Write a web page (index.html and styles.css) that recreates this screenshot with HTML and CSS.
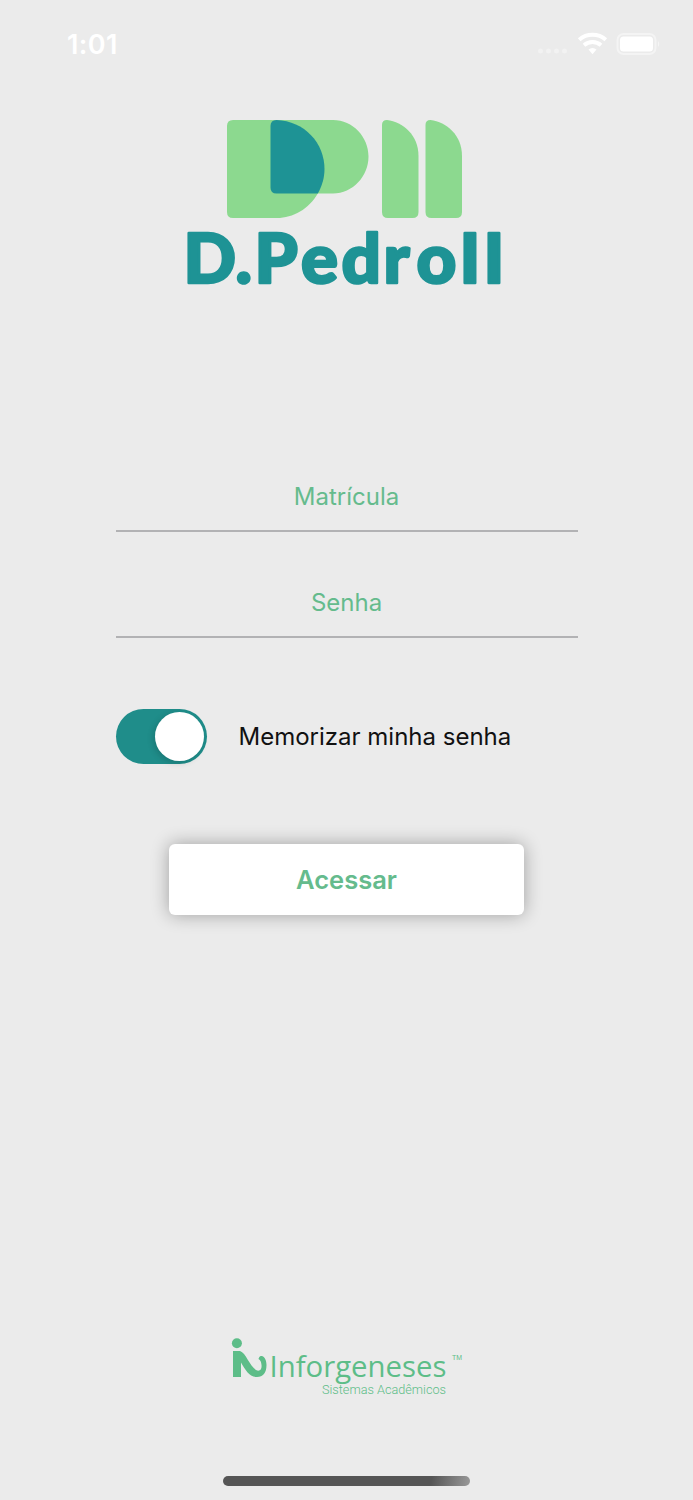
FILE: index.html
```html
<!DOCTYPE html>
<html lang="pt-BR">
<head>
<meta charset="utf-8">
<meta name="viewport" content="width=device-width">
<title>D.PedroII</title>
<link rel="stylesheet" href="styles.css">
</head>
<body>
<main class="screen">
  <header class="status">
    <span class="time">1:01</span>
    <svg class="indicators" width="124" height="28" viewBox="0 0 124 28">
      <g class="dots"><circle cx="4.5" cy="21" r="2.5"/><circle cx="12.5" cy="21" r="2.5"/><circle cx="20.5" cy="21" r="2.5"/><circle cx="28.5" cy="21" r="2.5"/></g>
      <g class="wifi"><path d="M43.2 9.700a20.500 20.500 0 0 1 26.600 0"/><path d="M48 15.200a13 13 0 0 1 17 0"/><path class="tip" d="M52.500 19.600a6 6 0 0 1 8 0l-4 4.600z"/></g>
      <rect class="case" x="81.500" y="4" width="38" height="20" rx="6"/>
      <rect class="charge" x="84" y="6.500" width="33" height="15" rx="3.500"/>
      <path class="pole" d="M122 11q2.500 3 0 6z"/>
    </svg>
  </header>

  <svg class="brand" width="330" height="190" viewBox="180 110 330 190" role="img" aria-label="D.PedroII">
    <g class="leaf">
      <path d="M233 120h100c20 0 35.500 17 35.500 36.500S353 193.500 333 193.500h-15.200C309 209 293 218 277 218h-44q-6 0-6-6v-86q0-6 6-6z"/>
      <path d="M387 120c16 2 31.500 15 31.500 36v56q0 6-6 6h-24.500q-6 0-6-6v-87q0-5 5-5z"/>
      <path d="M430.500 120c16 2 31.500 15 31.500 36v56q0 6-6 6h-24.500q-6 0-6-6v-87q0-5 5-5z"/>
    </g>
    <path class="core" d="M276.500 120c28 1 48 23 48 49 0 9-2.500 17-6.700 24.500h-41.300q-6 0-6-6V126q0-6 6-6z"/>
    <text class="wordmark" y="283.400" x="183.500 235.500 254.500 301 341.500 383.500 416.500 459.500 483.500">D.PedroII</text>
  </svg>

  <form class="login">
    <div class="field">Matrícula</div>
    <div class="field">Senha</div>
    <div class="remember">
      <span class="switch"><span class="knob"></span></span>
      <span class="remember-label">Memorizar minha senha</span>
    </div>
    <button class="submit" type="button">Acessar</button>
  </form>

  <footer class="footer">
    <svg class="vendor" width="240" height="66" viewBox="228 1334 240 66">
      <circle cx="236.900" cy="1343.300" r="5"/>
      <path d="M233 1351h7c6 2 9 14 16 19 4 2 6-1 5.500-5-.3-3-1-5-3-6 .5-2.500 2-3 3-3 3.500.5 5 5 5 9 0 8-3.500 12-9.500 12-8 0-11.500-7-16-14.500v14.500h-8z"/>
      <text class="vendor-name" x="269.500" y="1377" textLength="177" lengthAdjust="spacingAndGlyphs">Inforgeneses</text>
      <text class="vendor-tag" x="322" y="1394" textLength="124" lengthAdjust="spacingAndGlyphs">Sistemas Acadêmicos</text>
      <text class="trade" x="452" y="1360" textLength="10" lengthAdjust="spacingAndGlyphs">TM</text>
    </svg>
    <div class="home"></div>
  </footer>
</main>
</body>
</html>
```
FILE: styles.css
```css
* { box-sizing: border-box; }
body { margin: 0; background: #ebebeb; font-family: Inter, "Liberation Sans", sans-serif; }
.screen { width: 693px; height: 1500px; display: flex; flex-direction: column; align-items: center; }
.status { width: 100%; height: 110px; padding: 30px 33px 0 67px; display: flex; justify-content: space-between; align-items: flex-start; }
.time { color: #fff; font-size: 27px; line-height: 30px; font-weight: 600; letter-spacing: .4px; }
.indicators { fill: #fff; }
.dots { opacity: .35; }
.wifi { fill: none; stroke: #fff; stroke-width: 4; }
.wifi .tip { fill: #fff; stroke: none; }
.case { fill: none; stroke: #fff; stroke-width: 2; opacity: .45; }
.pole { opacity: .5; }
.brand { flex: none; margin-right: 3px; overflow: visible; }
.leaf { fill: #8cd98f; }
.core { fill: #1e9395; }
.wordmark { fill: #1e9395; stroke: #1e9395; stroke-width: 2.6; stroke-linejoin: round; font-family: Lato, sans-serif; font-weight: 900; font-size: 69px; }
.login { width: 462px; margin-top: 165.500px; display: flex; flex-direction: column; }
.field { height: 66px; padding-top: 16px; border-bottom: 2px solid #b2b2b4; color: #65bb8d; font-size: 24px; line-height: 30px; text-align: center; }
.field + .field { margin-top: 40.500px; }
.remember { margin-top: 71px; height: 55px; display: flex; align-items: center; gap: 32px; }
.switch { width: 91px; height: 55px; padding: 3px; border-radius: 28px; background: #1f8d8a; display: flex; justify-content: flex-end; }
.knob { width: 49px; height: 49px; border-radius: 50%; background: #fff; box-shadow: -2px 2px 6px rgba(0,0,0,.15); }
.remember-label { color: #111; font-size: 24px; white-space: nowrap; }
.submit { align-self: center; width: 355px; height: 71px; margin-top: 80px; padding: 0; border: 0; border-radius: 6px; background: #fff; box-shadow: 0 0 18px rgba(0,0,0,.32); color: #65bb8d; font: 600 25.500px Inter, sans-serif; }
.footer { margin-top: auto; display: flex; flex-direction: column; align-items: center; padding-bottom: 14px; }
.vendor { margin-left: 3px; margin-bottom: 76px; fill: #5dbd88; }
.vendor-name { font-family: "Open Sans", sans-serif; font-size: 28.500px; }
.vendor-tag { font-family: Roboto, sans-serif; font-weight: 300; font-size: 13px; }
.trade { font-family: "Liberation Sans", sans-serif; font-size: 6.500px; }
.home { width: 247px; height: 10px; border-radius: 5px; background: linear-gradient(100deg, #555 0 84%, #999 100%); }
```
